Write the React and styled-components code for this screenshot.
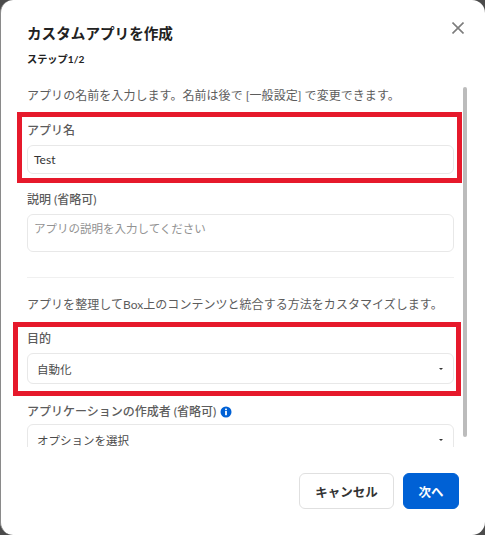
import React from 'react';
import styled, { createGlobalStyle } from 'styled-components';

const GlobalStyle = createGlobalStyle`
	html, body {
		margin: 0;
		padding: 0;
		background: #4b4b4b;
		font-family: "Lato", "Noto Sans CJK JP", sans-serif;
	}
	* {
		box-sizing: border-box;
	}
`;

const App = () => {
	return (
		<Modal>
			<GlobalStyle />
			<Header>
				<Title>カスタムアプリを作成</Title>
				<CloseButton aria-label="close">
					<svg width="12" height="12" viewBox="0 0 12 12">
						<path d="M0.5 0.5 L11.5 11.5 M11.5 0.5 L0.5 11.5" stroke="#7d7d7d" strokeWidth="1.6" fill="none" />
					</svg>
				</CloseButton>
				<Step>ステップ1/2</Step>
			</Header>

			<Body>
				<Thumb />
				<Intro $spacing={0.05} $mb={17}>アプリの名前を入力します。名前は後で [一般設定] で変更できます。</Intro>

				<Field $mb={18}>
					<Label>アプリ名</Label>
					<Input>Test</Input>
					<Highlight $left={-10} $right={-8} $top={-11} $bottom={-9} />
				</Field>

				<Field>
					<Label>説明 (省略可)</Label>
					<Textarea>アプリの説明を入力してください</Textarea>
				</Field>

				<Divider />

				<Intro $spacing={0.04} $mb={16}>アプリを整理してBox上のコンテンツと統合する方法をカスタマイズします。</Intro>

				<Field $mb={20}>
					<Label>目的</Label>
					<Select>
						自動化
						<Caret />
					</Select>
					<Highlight $left={-14} $right={-7} $top={-9} $bottom={-12} />
				</Field>

				<Field>
					<Label $mb={4}>
						アプリケーションの作成者 (省略可)
						<svg width="12" height="12" viewBox="0 0 12 12">
							<circle cx="6" cy="6" r="5.5" fill="#0061d5" />
							<rect x="5.1" y="5" width="1.8" height="4.2" fill="#fff" />
							<rect x="5.1" y="2.6" width="1.8" height="1.6" fill="#fff" />
						</svg>
					</Label>
					<Select>
						オプションを選択
						<Caret />
					</Select>
				</Field>
			</Body>

			<Footer>
				<CancelButton>キャンセル</CancelButton>
				<NextButton>次へ</NextButton>
			</Footer>
		</Modal>
	);
};

export default App;

const Modal = styled.div`
	width: 485px;
	height: 535px;
	display: flex;
	flex-direction: column;
	background: #fff;
	border-radius: 13px;
	border-left: 1px solid #8a8a8a;
	overflow: hidden;
`;

const Header = styled.div`
	position: relative;
	height: 82px;
	padding: 23px 0 0 26px;
	flex-shrink: 0;
`;

const Title = styled.h2`
	margin: 0;
	font-size: 14.6px;
	line-height: 22px;
	font-weight: 700;
	color: #222;
`;

const Step = styled.div`
	margin-top: 6px;
	font-size: 10.2px;
	line-height: 16px;
	font-weight: 700;
	color: #222;
`;

const CloseButton = styled.div`
	position: absolute;
	top: 22px;
	right: 21px;
	width: 12px;
	height: 12px;
	line-height: 0;
`;

const Body = styled.div`
	position: relative;
	height: 365px;
	padding: 4px 31px 0 26px;
	flex-shrink: 0;
	overflow: hidden;
`;

const Thumb = styled.div`
	position: absolute;
	top: 5px;
	right: 18px;
	width: 4px;
	height: 350px;
	border-radius: 2px;
	background: #bcbcbc;
`;

const Intro = styled.p`
	margin: 0 0 ${(p) => p.$mb}px;
	font-size: 12px;
	letter-spacing: ${(p) => p.$spacing}px;
	line-height: 20px;
	color: #5c5c5c;
	white-space: nowrap;
`;

const Field = styled.div`
	position: relative;
	margin-bottom: ${(p) => p.$mb ?? 0}px;
`;

const Label = styled.div`
	display: flex;
	align-items: center;
	gap: 4px;
	margin-bottom: ${(p) => p.$mb ?? 6}px;
	font-size: 12px;
	line-height: 16px;
	font-weight: 500;
	color: #5c5c5c;
`;

const Input = styled.div`
	height: 29px;
	padding: 0 6px;
	display: flex;
	align-items: center;
	border: 1px solid #e8e8e8;
	border-radius: 6px;
	font-size: 12px;
	color: #333;
`;

const Textarea = styled.div`
	height: 38px;
	padding: 6px 6px;
	border: 1px solid #e8e8e8;
	border-radius: 6px;
	font-size: 11.5px;
	line-height: 16px;
	color: #929292;
`;

const Select = styled.div`
	height: 31px;
	padding: 0 9px;
	display: flex;
	align-items: center;
	justify-content: space-between;
	border: 1px solid #e8e8e8;
	border-radius: 6px;
	font-size: 11.5px;
	color: #4a4a4a;
`;

const Caret = styled.span`
	margin-right: 1px;
	border-left: 2.5px solid transparent;
	border-right: 2.5px solid transparent;
	border-top: 2.5px solid #333;
`;

const Divider = styled.div`
	height: 1px;
	margin: 25px 0 17px;
	background: #f0f0f0;
`;

const Highlight = styled.div`
	position: absolute;
	left: ${(p) => p.$left}px;
	right: ${(p) => p.$right}px;
	top: ${(p) => p.$top}px;
	bottom: ${(p) => p.$bottom}px;
	border: 5px solid #e6192b;
	pointer-events: none;
`;

const Footer = styled.div`
	flex: 1;
	display: flex;
	justify-content: flex-end;
	gap: 9px;
	padding: 26px 26px 0 0;
`;

const Button = styled.button`
	height: 36px;
	padding: 0;
	border-radius: 6px;
	font-family: inherit;
	font-size: 12.5px;
	font-weight: 700;
`;

const CancelButton = styled(Button)`
	width: 95px;
	background: #fff;
	border: 1px solid #e0e0e0;
	color: #333;
`;

const NextButton = styled(Button)`
	width: 56px;
	background: #0061d5;
	border: 1px solid #0061d5;
	color: #fff;
`;
